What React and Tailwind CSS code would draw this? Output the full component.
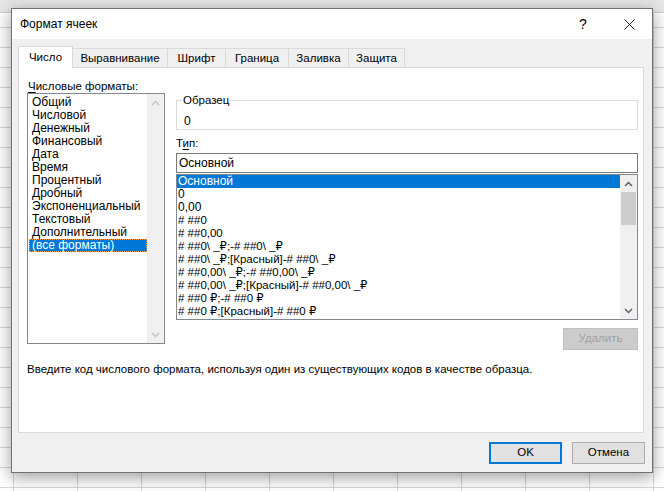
import React from 'react';

const formats = [
  'Общий',
  'Числовой',
  'Денежный',
  'Финансовый',
  'Дата',
  'Время',
  'Процентный',
  'Дробный',
  'Экспоненциальный',
  'Текстовый',
  'Дополнительный',
  '(все форматы)',
];

const types = [
  'Основной',
  '0',
  '0,00',
  '# ##0',
  '# ##0,00',
  '# ##0\\ _₽;-# ##0\\ _₽',
  '# ##0\\ _₽;[Красный]-# ##0\\ _₽',
  '# ##0,00\\ _₽;-# ##0,00\\ _₽',
  '# ##0,00\\ _₽;[Красный]-# ##0,00\\ _₽',
  '# ##0 ₽;-# ##0 ₽',
  '# ##0 ₽;[Красный]-# ##0 ₽',
];

const tabs = [
  { label: 'Число', w: 'w-[55px]' },
  { label: 'Выравнивание', w: 'w-[95px]' },
  { label: 'Шрифт', w: 'w-[58px]' },
  { label: 'Граница', w: 'w-[63px]' },
  { label: 'Заливка', w: 'w-[60px]' },
  { label: 'Защита', w: 'w-[56px]' },
];

function Chevron({ up, color }) {
  return (
    <svg width="9" height="6" viewBox="0 0 9 6">
      <path
        d={up ? 'M1 5 L4.5 1.5 L8 5' : 'M1 1 L4.5 4.5 L8 1'}
        stroke={color}
        strokeWidth="1.5"
        fill="none"
      />
    </svg>
  );
}

function ScrollBar({ disabled }) {
  const color = disabled ? '#c4c4c4' : '#606060';
  return (
    <div className="flex w-[17px] flex-col bg-[#f0f0f0]">
      <div className="flex h-[17px] items-center justify-center">
        <Chevron up color={color} />
      </div>
      <div className="flex-1">
        {!disabled && <div className="mx-px h-[33px] bg-[#cdcdcd]" />}
      </div>
      <div className="flex h-[17px] items-center justify-center">
        <Chevron color={color} />
      </div>
    </div>
  );
}

export default function App() {
  return (
    <div className="relative h-screen w-full overflow-hidden bg-white bg-[linear-gradient(to_right,#d6d6d6_1px,transparent_1px),linear-gradient(to_bottom,#d6d6d6_1px,transparent_1px)] bg-[size:64px_20px] bg-[position:13px_7px] font-['Liberation_Sans','DejaVu_Sans',sans-serif] text-[12px] text-black">
      <div className="h-[13px] border-b border-[#d0d0d0] bg-[#e6e6e6]" />

      {/* dialog window */}
      <div className="absolute left-[11px] top-[8px] flex h-[465px] w-[642px] flex-col border border-[#727272] bg-[#f0f0f0] shadow-[0_4px_16px_rgba(0,0,0,0.4)]">
        {/* title bar */}
        <div className="flex h-[30px] items-center bg-white pl-[8px]">
          <span className="flex-1">Формат ячеек</span>
          <span className="w-[46px] text-center text-[14px]">?</span>
          <span className="flex w-[46px] items-center justify-center">
            <svg width="11" height="11" viewBox="0 0 11 11">
              <path d="M0.5 0.5 L10.5 10.5 M10.5 0.5 L0.5 10.5" stroke="#222" strokeWidth="1" />
            </svg>
          </span>
        </div>

        <div className="flex flex-1 flex-col pl-[6px] pr-[7px] pt-[7px]">
          {/* tabs */}
          <div className="flex h-[21px] items-end text-[11.5px]">
            {tabs.map((t, i) =>
              i === 0 ? (
                <div
                  key={t.label}
                  className={`${t.w} relative z-10 -mb-px flex h-[22px] items-center justify-center border border-b-0 border-[#d9d9d9] bg-white`}
                >
                  {t.label}
                </div>
              ) : (
                <div
                  key={t.label}
                  className={`${t.w} flex h-[19px] items-center justify-center border-t border-r border-[#d9d9d9] bg-[#f0f0f0] pt-[1px]`}
                >
                  {t.label}
                </div>
              )
            )}
          </div>

          {/* tab panel */}
          <div className="flex h-[366px] w-[626px] flex-col border border-[#d9d9d9] bg-white pl-[8px] pt-[11px]">
            <div className="flex gap-[11px]">
              {/* left column */}
              <div className="flex w-[138px] flex-col">
                <div className="h-[14px] pl-px text-[11.5px] leading-[14px]">
                  <span className="underline underline-offset-2">Ч</span>исловые форматы:
                </div>
                <div className="flex h-[251px] border border-[#828790] bg-white">
                  <div className="flex-1 pl-px pt-[2px]">
                    {formats.map((f, i) =>
                      i === formats.length - 1 ? (
                        <div
                          key={f}
                          className="h-[13px] border border-dotted border-[#f59a3a] bg-[#0078d7] pl-[2px] leading-[11px] text-white"
                        >
                          {f}
                        </div>
                      ) : (
                        <div key={f} className="h-[13px] pl-[3px] leading-[13px]">
                          {f}
                        </div>
                      )
                    )}
                  </div>
                  <ScrollBar disabled />
                </div>
              </div>

              {/* right column */}
              <div className="flex w-[462px] flex-col">
                <div className="relative mt-[21px] h-[30px] border border-[#dcdcdc] pl-[7px] pt-[13px] leading-[14px]">
                  <span className="absolute -top-[8px] left-[5px] bg-white px-px text-[11.5px] leading-[14px]">Образец</span>
                  0
                </div>
                <div className="mt-[6px] h-[14px] text-[11.5px] leading-[14px]">
                  Т<span className="underline underline-offset-2">и</span>п:
                </div>
                <div className="mt-[3px] flex h-[20px] items-center border border-[#7a7a7a] pl-[2px]">
                  Основной
                </div>
                <div className="mt-px flex h-[146px] border border-[#828790]">
                  <div className="flex-1 text-[11.5px]">
                    {types.map((t, i) => (
                      <div
                        key={t}
                        className={`h-[13px] whitespace-pre pl-[1px] leading-[13px] ${
                          i === 0 ? 'bg-[#0078d7] text-[12px] text-white' : i < 3 ? 'text-[12px]' : ''
                        }`}
                      >
                        {t}
                      </div>
                    ))}
                  </div>
                  <ScrollBar />
                </div>
                <div className="mt-[8px] flex justify-end">
                  <div className="flex h-[22px] w-[75px] items-center justify-center border border-[#bfbfbf] bg-[#cccccc] text-[11.5px] text-[#a0a0a0]">
                    Удалить
                  </div>
                </div>
              </div>
            </div>

            <div className="mt-[12px] h-[14px] text-[11.5px] leading-[14px]">
              Введите код числового формата, используя один из существующих кодов в качестве образца.
            </div>
          </div>

          {/* dialog buttons */}
          <div className="mt-[9px] flex justify-end gap-[10px] text-[11.5px]">
            <div className="flex h-[22px] w-[73px] items-center justify-center border-2 border-[#0078d7] bg-[#e1e1e1]">
              OK
            </div>
            <div className="flex h-[22px] w-[73px] items-center justify-center border border-[#adadad] bg-[#e1e1e1]">
              Отмена
            </div>
          </div>
        </div>
      </div>
    </div>
  );
}
